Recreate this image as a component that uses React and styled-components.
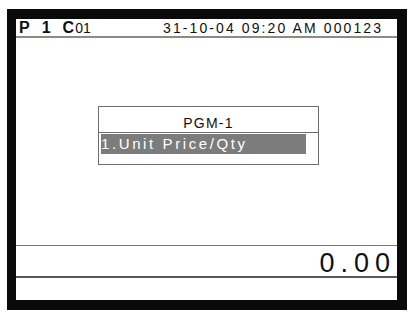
import React from 'react'
import styled, { createGlobalStyle } from 'styled-components'

const Global = createGlobalStyle`
  html, body {
    margin: 0;
    padding: 0;
    background: #fff;
  }
  body {
    font-family: 'Liberation Sans', Arial, sans-serif;
    color: #111;
  }
`

export default function App () {
  return (
    <>
      <Global />
      <Page>
        <Frame>
          <Header>
            <Mode>
              <Big>P</Big>
              <Big>1</Big>
              <Big $tight>C</Big><Small>01</Small>
            </Mode>
            <Stamp>31-10-04 09:20 AM 000123</Stamp>
          </Header>
          <Main>
            <Dialog>
              <DialogTitle>PGM-1</DialogTitle>
              <DialogBody>
                <Item $selected>1.Unit Price/Qty</Item>
              </DialogBody>
            </Dialog>
          </Main>
          <Amount>0.00</Amount>
          <Footer />
        </Frame>
      </Page>
    </>
  )
}

const Page = styled.div`
  padding: 9px 0 0 7px;
  width: 412px;
  height: 312px;
  box-sizing: border-box;
`

const Frame = styled.div`
  box-sizing: border-box;
  width: 400px;
  height: 301px;
  border-style: solid;
  border-color: #0a0a0a;
  border-width: 10px 10px 10px 9px;
  display: flex;
  flex-direction: column;
`

const Header = styled.div`
  height: 17px;
  border-bottom: 2px solid #8a8a8a;
  display: flex;
  align-items: flex-end;
  padding: 0 0 0 3px;
`

const Mode = styled.div`
  display: flex;
  align-items: baseline;
  width: 144px;
  line-height: 15px;
`

const Big = styled.span`
  font-size: 16px;
  font-weight: bold;
  margin-right: ${p => (p.$tight ? '1px' : '12px')};
`

const Small = styled.span`
  font-size: 14px;
`

const Stamp = styled.span`
  font-size: 14px;
  line-height: 15px;
  letter-spacing: 2.1px;
  white-space: nowrap;
`

const Main = styled.div`
  flex: 1;
  padding: 68px 0 0 82px;
`

const Dialog = styled.div`
  width: 221px;
  height: 59px;
  box-sizing: border-box;
  border: 1px solid #6e6e6e;
  display: flex;
  flex-direction: column;
`

const DialogTitle = styled.div`
  height: 25px;
  border-bottom: 1px solid #6e6e6e;
  text-align: center;
  font-size: 14px;
  line-height: 32px;
  letter-spacing: 1.2px;
  overflow: hidden;
`

const DialogBody = styled.div`
  padding: 1px 0 0 2px;
`

const Item = styled.div`
  width: 205px;
  height: 20px;
  background: ${p => (p.$selected ? '#7c7c7c' : 'transparent')};
  color: ${p => (p.$selected ? '#fff' : '#111')};
  font-size: 15px;
  line-height: 20px;
  letter-spacing: 2.6px;
  white-space: nowrap;
`

const Amount = styled.div`
  height: 30px;
  border-top: 1px solid #7a7a7a;
  border-bottom: 2px solid #5a5a5a;
  text-align: right;
  font-size: 27px;
  line-height: 34px;
  letter-spacing: 6px;
  padding-right: 1px;
  font-weight: 300;
`

const Footer = styled.div`
  height: 22px;
`
